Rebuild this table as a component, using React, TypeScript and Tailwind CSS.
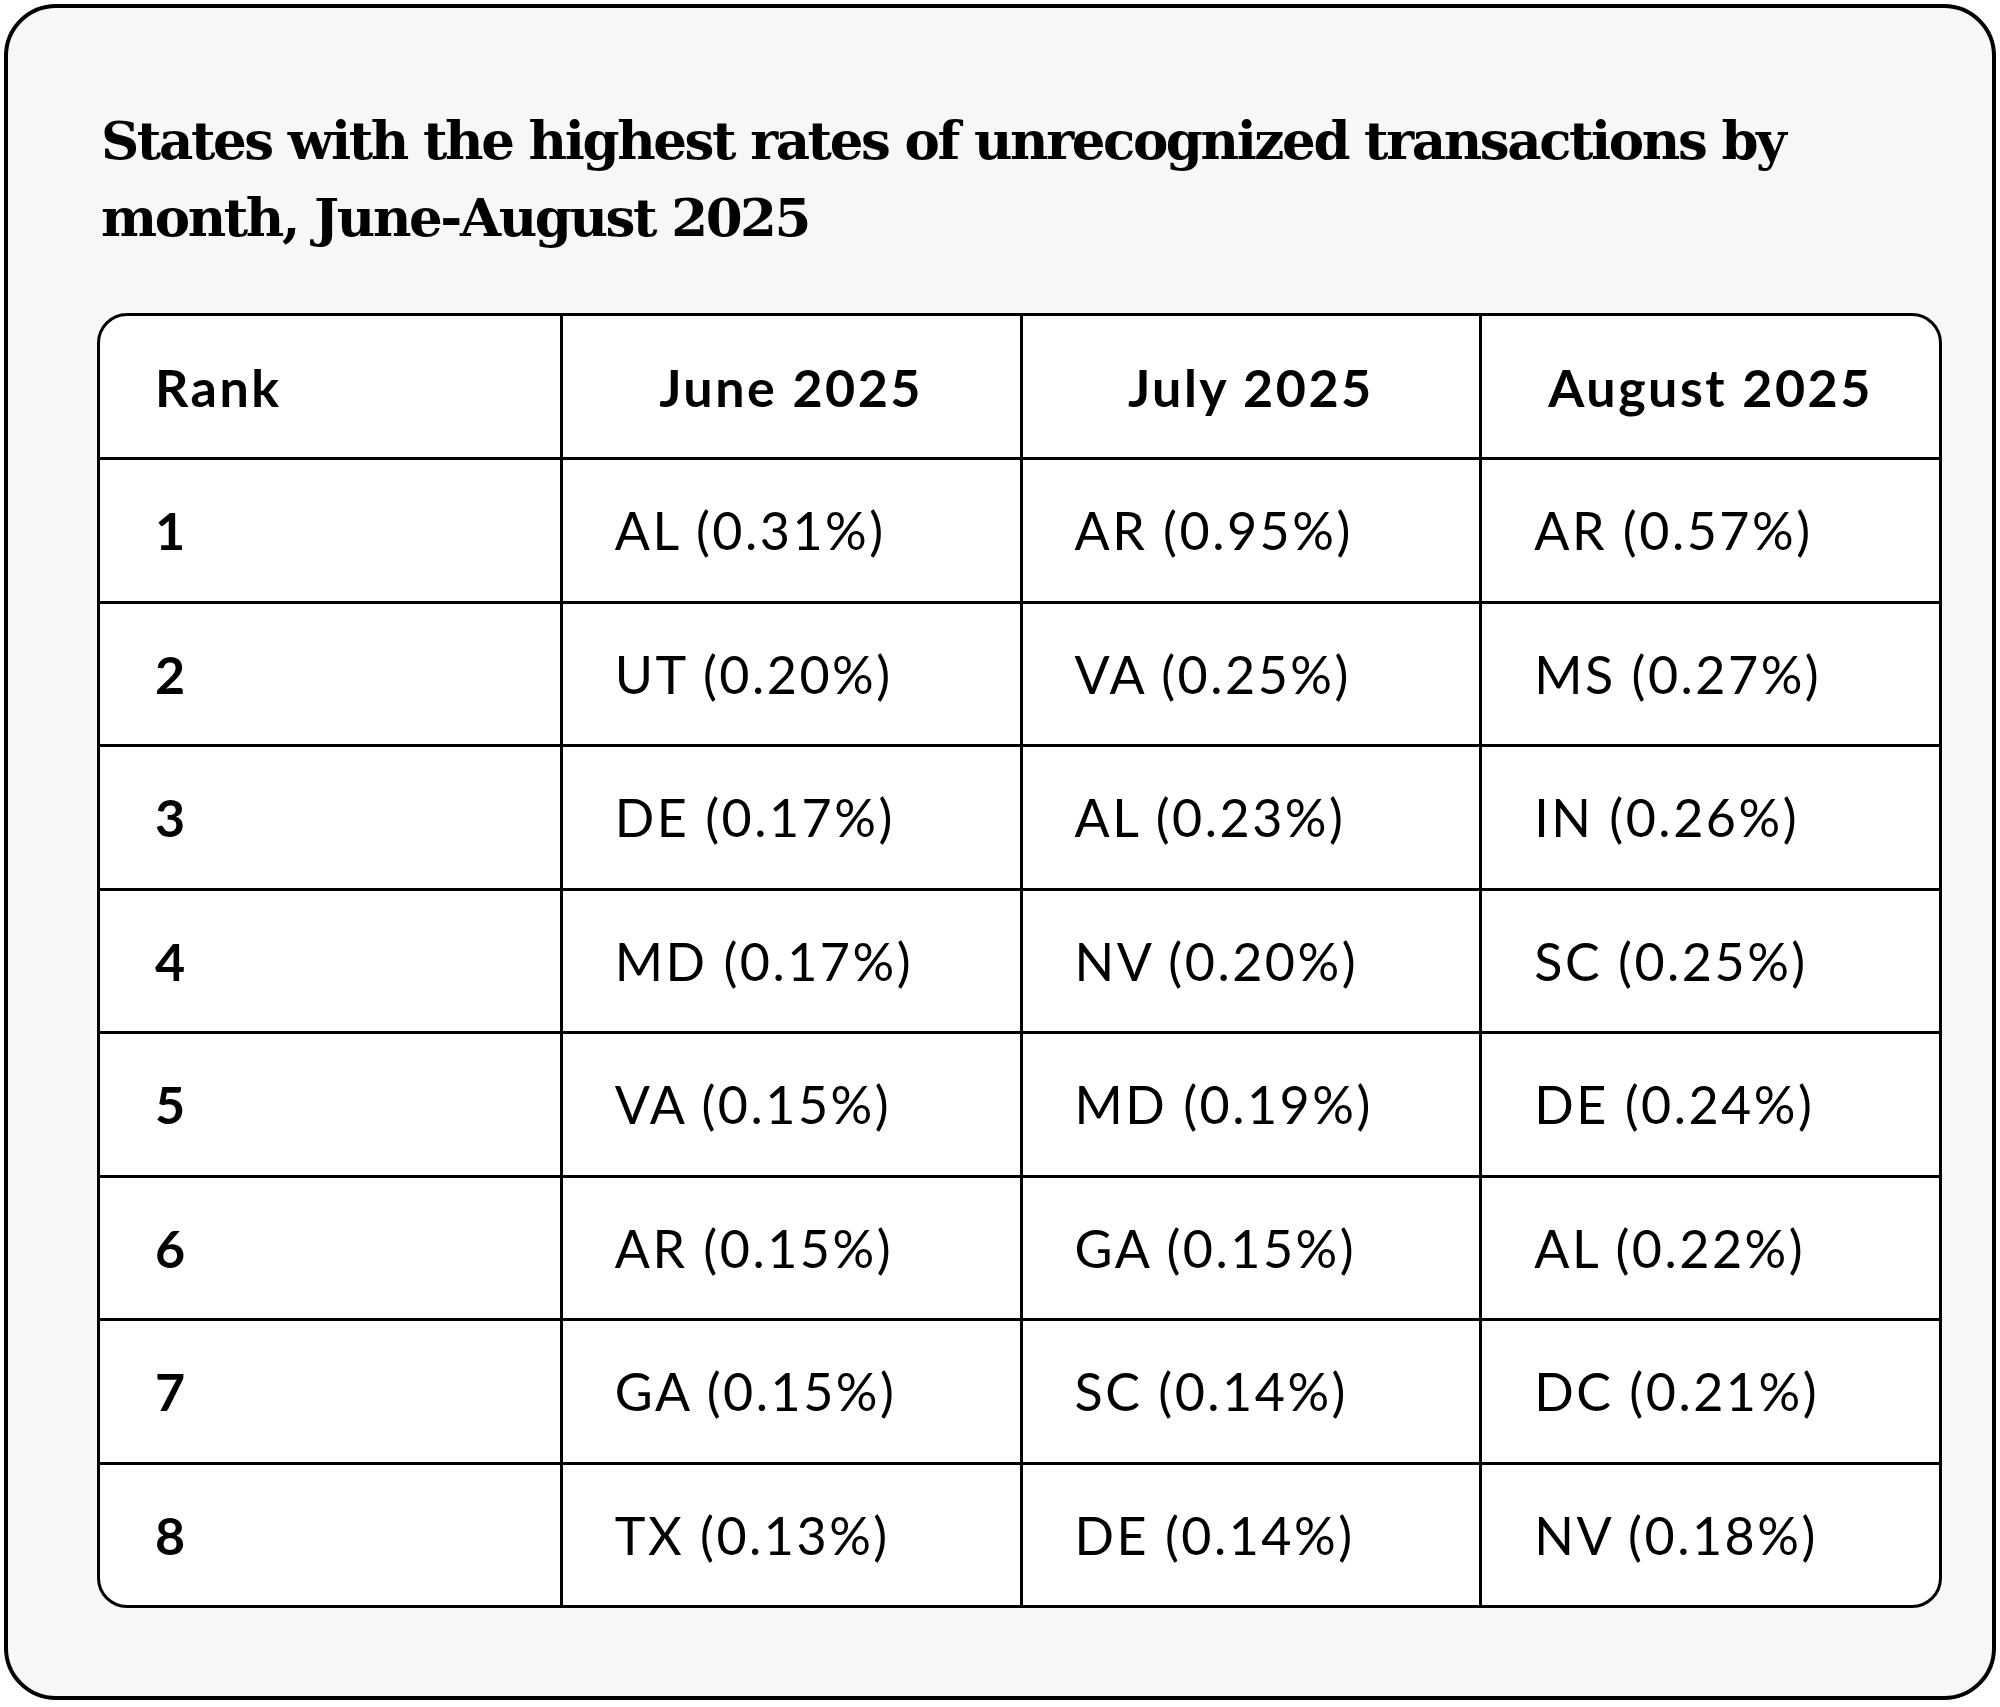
const columns = ["June 2025", "July 2025", "August 2025"];

const rows = [
  ["AL (0.31%)", "AR (0.95%)", "AR (0.57%)"],
  ["UT (0.20%)", "VA (0.25%)", "MS (0.27%)"],
  ["DE (0.17%)", "AL (0.23%)", "IN (0.26%)"],
  ["MD (0.17%)", "NV (0.20%)", "SC (0.25%)"],
  ["VA (0.15%)", "MD (0.19%)", "DE (0.24%)"],
  ["AR (0.15%)", "GA (0.15%)", "AL (0.22%)"],
  ["GA (0.15%)", "SC (0.14%)", "DC (0.21%)"],
  ["TX (0.13%)", "DE (0.14%)", "NV (0.18%)"],
];

export default function App() {
  return (
    <div className="bg-white p-[4px]">
      <div className="rounded-[52px] border-[4px] border-black bg-[#f8f7f5] pt-[94px] pb-[88px] pl-[89px] pr-[50px]">
        <h1 className="font-['DejaVu_Serif',serif] text-[53px] leading-[77px] font-bold tracking-[-2.4px] text-black whitespace-nowrap pl-[4px]">
          States with the highest rates of unrecognized transactions by
          <br />
          month, June-August 2025
        </h1>

        <div className="mt-[57px] overflow-hidden rounded-[30px] border-[3px] border-black bg-white font-['Lato',sans-serif] tracking-[2.5px] text-black">
          <div className="grid h-[141px] grid-cols-4">
            <div className="flex items-center pl-[55px] text-[52px] font-bold">Rank</div>
            {columns.map((c) => (
              <div
                key={c}
                className="flex items-center justify-center border-l-[3px] border-black text-[52px] font-bold"
              >
                {c}
              </div>
            ))}
          </div>

          {rows.map((r, i) => (
            <div key={i} className="grid h-[143.5px] grid-cols-4 border-t-[3px] border-black">
              <div className="flex items-center pl-[55px] text-[52px] font-bold">{i + 1}</div>
              {r.map((v, j) => (
                <div
                  key={j}
                  className="flex items-center border-l-[3px] border-black pl-[52px] text-[52px]"
                >
                  {v}
                </div>
              ))}
            </div>
          ))}
        </div>
      </div>
    </div>
  );
}
